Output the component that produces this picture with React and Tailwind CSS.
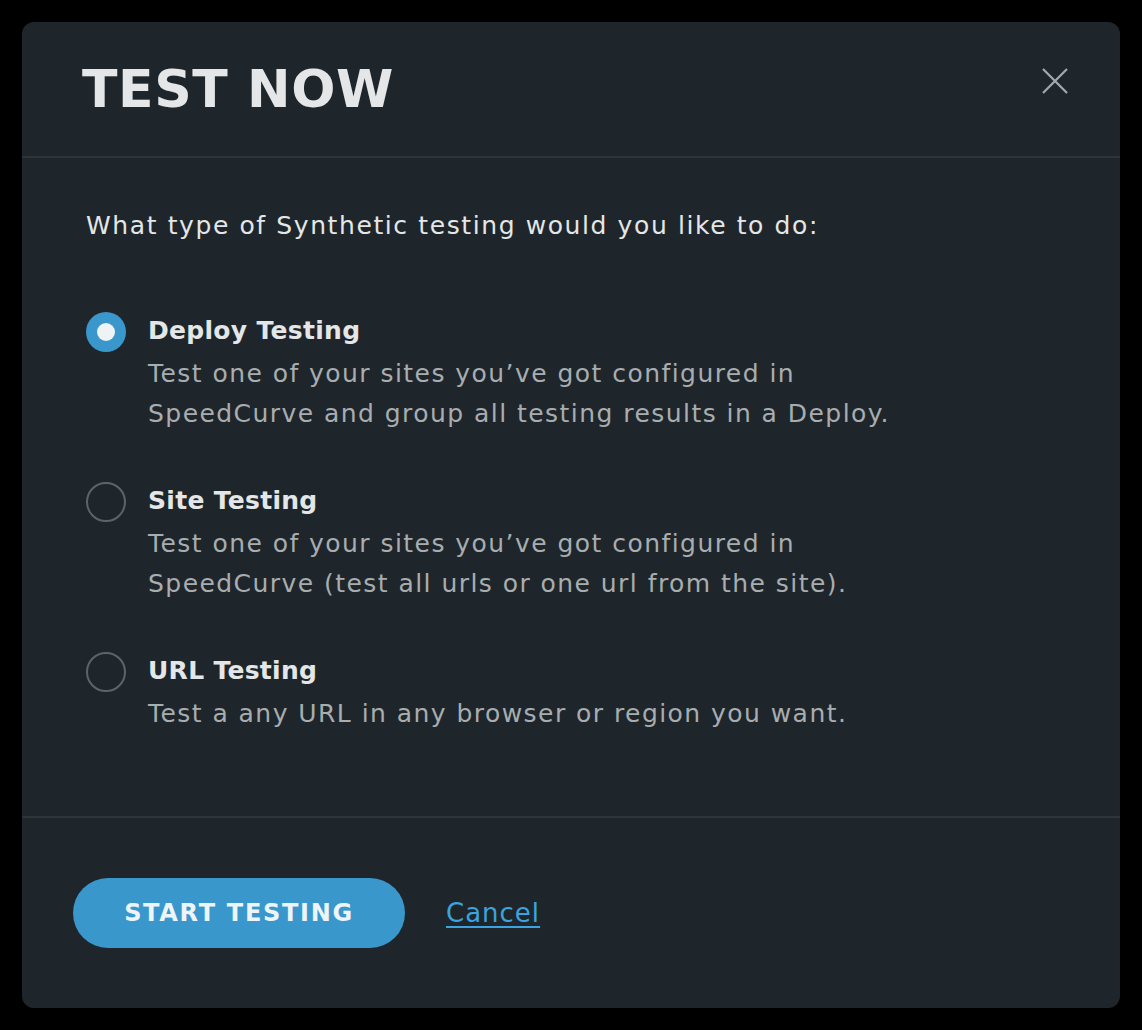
import { useState } from "react";

const options = [
  {
    id: "deploy",
    title: "Deploy Testing",
    lines: [
      "Test one of your sites you’ve got configured in",
      "SpeedCurve and group all testing results in a Deploy.",
    ],
  },
  {
    id: "site",
    title: "Site Testing",
    lines: [
      "Test one of your sites you’ve got configured in",
      "SpeedCurve (test all urls or one url from the site).",
    ],
  },
  {
    id: "url",
    title: "URL Testing",
    lines: ["Test a any URL in any browser or region you want."],
  },
];

function Radio({ checked }) {
  return checked ? (
    <span className="flex h-[40px] w-[40px] shrink-0 items-center justify-center rounded-full bg-[#3a97cc]">
      <span className="h-[18px] w-[18px] rounded-full bg-[#eef3f6]" />
    </span>
  ) : (
    <span className="h-[40px] w-[40px] shrink-0 rounded-full border-2 border-[#5d6467]" />
  );
}

export default function App() {
  const [type, setType] = useState("deploy");

  return (
    <div
      className="flex min-h-[1030px] w-full bg-black p-[22px]"
      style={{ fontFamily: '"DejaVu Sans", sans-serif' }}
    >
      <div className="flex w-full flex-col rounded-[12px] bg-[#1f262b]">
        {/* Header */}
        <div className="flex h-[136px] items-center justify-between border-b-2 border-[#2d3539] pl-[60px] pr-[50px]">
          <h1 className="text-[52px] font-bold tracking-[0.6px] text-[#e4e6e7]">TEST NOW</h1>
          <button className="mb-[16px] text-[#a4a9ac]">
            <svg width="30" height="30" viewBox="0 0 30 30" fill="none" stroke="currentColor" strokeWidth="2.2">
              <path d="M3 3 L27 27 M27 3 L3 27" />
            </svg>
          </button>
        </div>

        {/* Body */}
        <div className="flex h-[660px] flex-col border-b-2 border-[#2d3539] pl-[64px] pt-[48px]">
          <p className="text-[25px] leading-[40px] tracking-[1.6px] text-[#e4e6e7]">
            What type of Synthetic testing would you like to do:
          </p>
          <div className="mt-[66px] flex flex-col gap-[48px]">
            {options.map((o) => (
              <label
                key={o.id}
                className="flex cursor-pointer gap-[22px]"
                onClick={() => setType(o.id)}
              >
                <Radio checked={type === o.id} />
                <div className="-mt-[4px]">
                  <div className="text-[25px] font-bold leading-[46px] tracking-[0.3px] text-[#e4e6e7]">
                    {o.title}
                  </div>
                  {o.lines.map((l) => (
                    <div key={l} className="text-[25px] leading-[40px] tracking-[1.45px] text-[#a8adb0]">
                      {l}
                    </div>
                  ))}
                </div>
              </label>
            ))}
          </div>
        </div>

        {/* Footer */}
        <div className="flex items-center gap-[41px] pl-[51px] pt-[60px]">
          <button className="h-[70px] w-[332px] rounded-full bg-[#3a97cc] text-[24px] font-bold tracking-[1.7px] text-[#eef5f9]">
            START TESTING
          </button>
          <a href="#" className="text-[26px] tracking-[1px] text-[#3ba3df] underline underline-offset-4">
            Cancel
          </a>
        </div>
      </div>
    </div>
  );
}
